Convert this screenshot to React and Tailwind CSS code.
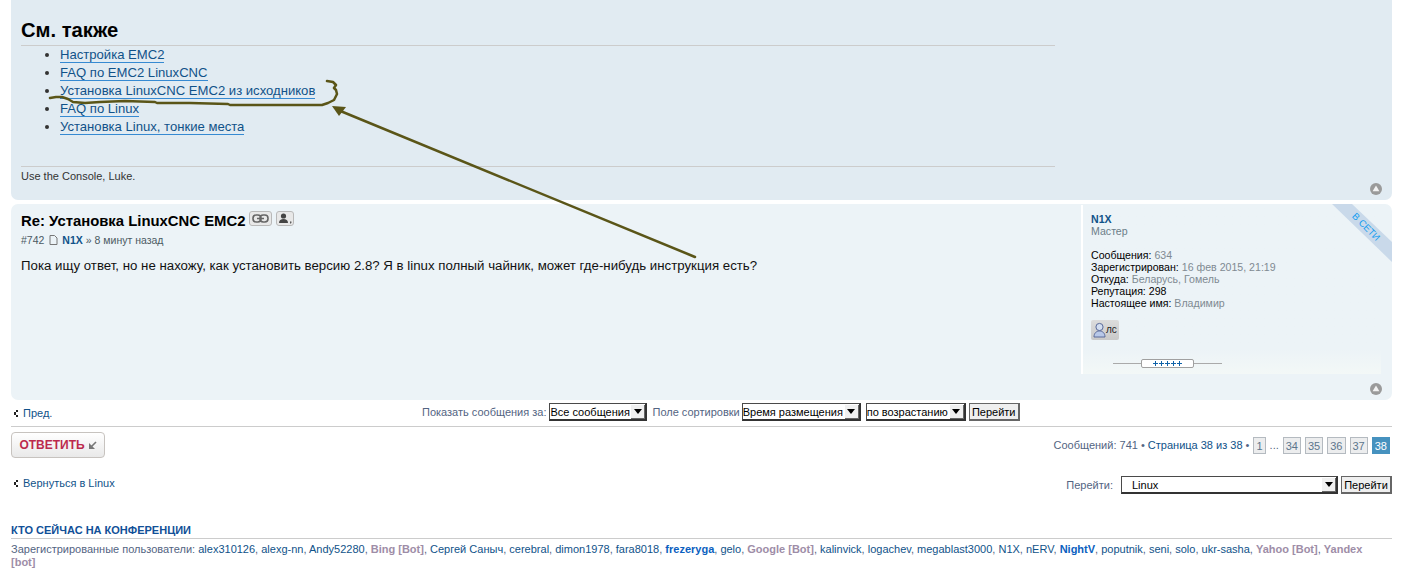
import React from "react";

const Up = () => (
  <svg width="12" height="12" viewBox="0 0 12 12" className="block">
    <circle cx="6" cy="6" r="6" fill="#9a9a9a" />
    <path d="M6 2.6 L9.4 8.2 H2.6 Z" fill="#f2f2f2" />
  </svg>
);

const Back = () => (
  <svg width="6" height="7" viewBox="0 0 6 7" className="block shrink-0">
    <path d="M3 0h2v2H3zM1 2h2v3H1zM3 5h2v2H3z" fill="#222" />
  </svg>
);

const Select = ({ children, w, pl = "pl-0" }) => (
  <div className={`${w} ${pl} h-[18px] flex items-center justify-between bg-white border border-t-[#4a4a4a] border-l-[#4a4a4a] border-r-2 border-b-2 border-r-[#333] border-b-[#333] text-[11px] text-black leading-[14px] whitespace-nowrap overflow-hidden`}>
    <span>{children}</span>
    <span className="w-[14px] h-[14px] flex items-center justify-center bg-[#f0f0f0] border-r border-b border-[#666] shrink-0">
      <svg width="8" height="5" viewBox="0 0 8 5" className="block"><path d="M0 0h8L4 5z" fill="#000" /></svg>
    </span>
  </div>
);

const Go = () => (
  <div className="w-[51px] h-[18px] flex items-center justify-center bg-[#efefef] border border-[#666] border-r-2 border-b-2 text-[11px] text-black leading-[14px]">Перейти</div>
);

const Page = ({ n, active }) => (
  <span className={`h-[17px] min-w-[12px] px-[2px] flex items-center justify-center border text-[11px] leading-[14px] ${active ? "bg-[#4692bf] border-[#4692bf] text-white" : "bg-[#ecedee] border-[#b4bac0] text-[#5c758c]"}`}>{n}</span>
);

const L = ({ children, cls = "text-[#105289]" }) => <span className={cls}>{children}</span>;

const links = [
  "Настройка EMC2",
  "FAQ по EMC2 LinuxCNC",
  "Установка LinuxCNC EMC2 из исходников",
  "FAQ по Linux",
  "Установка Linux, тонкие места",
];

export default function App() {
  return (
    <div className="relative w-[1412px] h-[572px] overflow-hidden bg-white pl-[11px] pr-[20px] font-['Liberation_Sans',Arial,sans-serif] text-[#536482]">
      {/* first post tail */}
      <section className="relative h-[200px] bg-[#e1ebf2] rounded-b-[7px] pl-[10px] pt-[18px]">
        <div className="w-[1034px]">
          <h2 className="h-[28px] text-[20.2px] leading-[24px] font-bold text-black border-b border-[#cccccc]">См. также</h2>
          <ul className="list-disc pl-[39px] text-[13.1px] leading-[18px] text-[#333]">
            {links.map((t) => (
              <li key={t} className="h-[18px]">
                <a className="text-[#105289] border-b border-[#368ad2] pb-0">{t}</a>
              </li>
            ))}
          </ul>
          <div className="mt-[30px] border-t border-[#cccccc] pt-[3px] text-[11px] leading-[13px] text-[#333333]">Use the Console, Luke.</div>
        </div>
        <div className="absolute right-[10px] bottom-[5px]"><Up /></div>
      </section>

      {/* reply */}
      <section className="relative mt-[4px] h-[196px] bg-[#ecf3f7] rounded-[7px] overflow-hidden flex">
        <div className="w-[1070px] shrink-0 pl-[10px] pt-[8px]">
          <div className="flex items-center h-[18px]">
            <h3 className="text-[14.87px] leading-[18px] font-bold text-black whitespace-nowrap">Re: Установка LinuxCNC EMC2</h3>
            <span className="ml-[4px] w-[23px] h-[15px] -mt-[5px] flex items-center justify-center rounded-[3px] border border-[#b9b9b9] bg-[#e8e8e8]">
              <svg width="17" height="9" viewBox="0 0 17 9" fill="none" stroke="#666" strokeWidth="1.6" className="block"><rect x="1" y="1" width="8" height="7" rx="3.2" /><rect x="8" y="1" width="8" height="7" rx="3.2" /><path d="M5 4.500h7" /></svg>
            </span>
            <span className="ml-[4px] w-[18px] h-[15px] -mt-[5px] flex items-center justify-center rounded-[3px] border border-[#b9b9b9] bg-[#e8e8e8]">
              <svg width="14" height="11" viewBox="0 0 14 11" className="block"><circle cx="5.500" cy="3" r="2.600" fill="#444" /><path d="M1 10c0-3 2-4 4.500-4S10 7 10 10z" fill="#444" /><path d="M12 8.500h1.400v1.200L12.400 11z" fill="#444" /></svg>
            </span>
          </div>
          <div className="mt-[3px] flex items-center h-[14px] text-[10.5px] leading-[13px] text-[#4b5a63] whitespace-nowrap">
            <span>#742</span>
            <svg width="9" height="10" viewBox="0 0 9 10" className="block ml-[5px] mr-[4px]" fill="none" stroke="#777"><path d="M1 .5h4.500l2.500 2.500v6.500H1z" /></svg>
            <b className="text-[#105289]">N1X</b>
            <span className="ml-[3px]">» 8 минут назад</span>
          </div>
          <p className="mt-[10px] text-[13.25px] leading-[18px] text-[#111]">Пока ищу ответ, но не нахожу, как установить версию 2.8? Я в linux полный чайник, может где-нибудь инструкция есть?</p>
        </div>
        <aside className="relative w-[300px] h-[169px] mt-[1px] border-l-2 border-white pl-[8px] pt-[8px] text-[10.6px] leading-[12px] text-[#333] shrink-0 bg-gradient-to-b from-[#ecf3f7] from-85% to-[#f3f8f7]">
          <div className="font-bold text-[#105289]">N1X</div>
          <div className="text-[#6b7d88]">Мастер</div>
          <div className="mt-[12px] text-black">Сообщения: <span className="text-[#808a92]">634</span></div>
          <div className="text-black">Зарегистрирован: <span className="text-[#808a92]">16 фев 2015, 21:19</span></div>
          <div className="text-black">Откуда: <span className="text-[#808a92]">Беларусь, Гомель</span></div>
          <div className="text-black">Репутация: 298</div>
          <div className="text-black">Настоящее имя: <span className="text-[#808a92]">Владимир</span></div>
          <div className="mt-[11px] w-[28px] h-[20px] flex items-center pl-[2px] rounded-[2px] bg-gradient-to-b from-[#dcdcdc] to-[#c9c9c9] text-[10px] text-[#222]">
            <svg width="13" height="16" viewBox="0 0 13 16" className="block shrink-0"><circle cx="6.500" cy="5" r="3.600" fill="#d3def0" stroke="#5a6a9a" /><path d="M1 15c0-4 2.500-6 5.500-6S12 11 12 15z" fill="#b8c8e8" stroke="#5a6a9a" /></svg>
            <span>лс</span>
          </div>
          <div className="absolute left-[30px] top-[158px] w-[109px] h-[1px] bg-[#aaaaaa]" />
          <div className="absolute left-[58px] top-[154px] w-[53px] h-[9px] rounded-[2px] border border-[#a0a0a0] bg-white flex items-center justify-center">
            <svg width="30" height="5" viewBox="0 0 30 5" className="block"><path d="M0 2h5v1H0zM2 0h1v5H2zM6 2h5v1H6zM8 0h1v5H8zM12 2h5v1h-5zM14 0h1v5h-1zM18 2h5v1h-5zM20 0h1v5h-1zM24 2h5v1h-5zM26 0h1v5h-1z" fill="#0f62a8" /></svg>
          </div>
        </aside>
        <div className="absolute right-0 top-0 w-[60px] h-[60px]">
          <svg width="60" height="60" viewBox="0 0 60 60" className="block"><path d="M0 0H20L60 38V58Z" fill="#c9d9ea" /></svg>
          <span className="absolute left-[14px] top-[18px] w-[40px] text-center rotate-45 text-[9.5px] leading-[10px] text-[#0f9cf0] whitespace-nowrap">В СЕТИ</span>
        </div>
        <div className="absolute right-[10px] bottom-[5px]"><Up /></div>
      </section>

      {/* sort row */}
      <div className="relative mt-[4px] h-[23px] border-b border-[#cccccc] flex items-start justify-between text-[11px] leading-[18px]">
        <div className="flex items-center gap-[4px] pl-[2px] h-[18px] text-[#105289]"><Back /><span>Пред.</span></div>
        <div className="absolute left-[411px] -top-[1px] flex items-center h-[18px] whitespace-nowrap text-[#536482]">
          <span>Показать сообщения за:</span>
          <div className="ml-[3px]"><Select w="w-[98px]">Все сообщения</Select></div>
          <span className="ml-[5px]">Поле сортировки</span>
          <div className="ml-[2px]"><Select w="w-[119px]">Время размещения</Select></div>
          <div className="ml-[5px]"><Select w="w-[100px]">по возрастанию</Select></div>
          <div className="ml-[3px]"><Go /></div>
        </div>
      </div>

      {/* action row */}
      <div className="mt-[5px] h-[26px] flex items-start justify-between">
        <div className="w-[94px] h-[26px] flex items-center justify-center gap-[3px] rounded-[4px] border border-[#c7c3bf] bg-gradient-to-b from-white to-[#e9e9e9] text-[12px] font-bold text-[#bc2a4d]">
          <span>ОТВЕТИТЬ</span>
          <svg width="9" height="9" viewBox="0 0 9 9" className="block"><path d="M8 1 3 6" fill="none" stroke="#777" strokeWidth="1.600" /><path d="M1 2v6h6z" fill="#777" /></svg>
        </div>
        <div className="flex items-center gap-[4px] mt-[5px] mr-[2px] text-[11px] leading-[17px] text-[#536482] whitespace-nowrap">
          <span>Сообщений: 741 • <span className="text-[#105289]">Страница 38 из 38</span> •</span>
          <Page n="1" />
          <span>...</span>
          <Page n="34" />
          <Page n="35" />
          <Page n="36" />
          <Page n="37" />
          <Page n="38" active />
        </div>
      </div>

      {/* back / jump */}
      <div className="mt-[18px] h-[20px] flex items-start justify-between">
        <div className="flex items-center gap-[4px] pl-[2px] h-[14px] text-[11px] text-[#105289]"><Back /><span>Вернуться в Linux</span></div>
        <div className="flex items-center h-[18px] text-[11px] text-[#536482]">
          <span>Перейти:</span>
          <div className="ml-[8px]"><Select w="w-[217px]" pl="pl-[10px]">Linux</Select></div>
          <div className="ml-[3px]"><Go /></div>
        </div>
      </div>

      {/* who is online */}
      <h3 className="mt-[27px] h-[16px] border-b border-[#cccccc] text-[11px] leading-[14px] font-bold uppercase text-[#115098]">Кто сейчас на конференции</h3>
      <p className="mt-[4px] text-[11px] leading-[13px] text-[#536482]">
        Зарегистрированные пользователи: <L>alex310126</L>, <L>alexg-nn</L>, <L>Andy52280</L>, <b className="text-[#9e8da7]">Bing [Bot]</b>, <L>Сергей Саныч</L>, <L>cerebral</L>, <L>dimon1978</L>, <L>fara8018</L>, <b className="text-[#0b5fc0]">frezeryga</b>, <L>gelo</L>, <b className="text-[#9e8da7]">Google [Bot]</b>, <L>kalinvick</L>, <L>logachev</L>, <L>megablast3000</L>, <L>N1X</L>, <L>nERV</L>, <b className="text-[#0b5fc0]">NightV</b>, <L>poputnik</L>, <L>seni</L>, <L>solo</L>, <L>ukr-sasha</L>, <b className="text-[#9e8da7]">Yahoo [Bot]</b>, <b className="text-[#9e8da7]">Yandex<br />[bot]</b>
      </p>

      {/* hand-drawn annotation */}
      <svg width="1412" height="572" viewBox="0 0 1412 572" className="absolute left-0 top-0 pointer-events-none" fill="none">
        <path d="M50 98 L56 97 L62 97 L68 99 L73 102 L85 103 L100 102 L125 101 L155 102 L157 103 L190 103 L228 104 L230 105 L260 105 L295 105 L322 105 L328 103 L334 100 L337 94 L336 90 L334 88 L336 85 L333 82 L327 81" stroke="#5a5518" strokeWidth="2.500" strokeLinecap="round" strokeLinejoin="round" />
        <path d="M695 257 L338 110" stroke="#5a5518" strokeWidth="2.500" strokeLinecap="round" />
        <path d="M332 106 L346 107 L339 116 Z" fill="#5a5518" />
      </svg>
    </div>
  );
}
